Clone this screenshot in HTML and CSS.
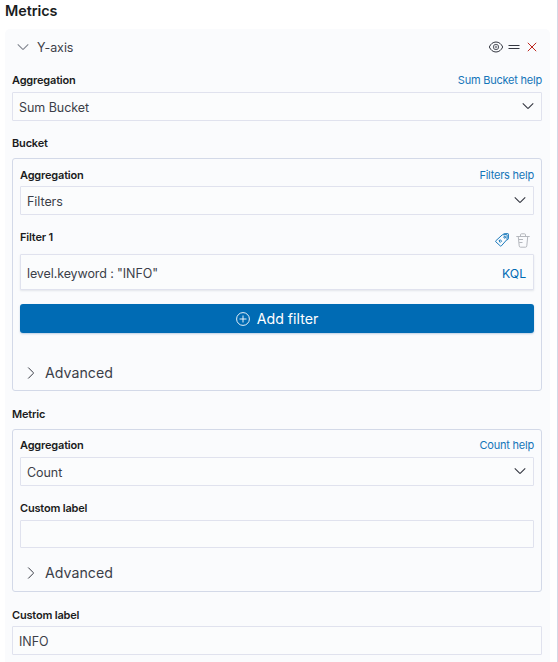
FILE: index.html
```html
<!DOCTYPE html>
<html lang="en">
<head>
<meta charset="utf-8">
<title>Metrics</title>
<link rel="stylesheet" href="styles.css">
</head>
<body>
<main class="sidebar">
  <h1 class="title">Metrics</h1>
  <section class="panel">
    <header class="panel-header">
      <svg class="chevron muted" width="14" height="14" viewBox="0 0 16 16"><path d="M2 5l5.500 5.500a.7.7 0 0 0 1 0L14 5"/></svg>
      <span class="panel-name">Y-axis</span>
      <span class="actions">
        <svg width="16" height="16" viewBox="0 0 16 16"><path d="M1.300 8C2.700 4.900 5 3 8 3s5.300 1.900 6.700 5c-1.400 3.100-3.700 5-6.700 5S2.700 11.100 1.300 8z"/><circle cx="8" cy="8" r="2.700" stroke-width=".8"/><circle cx="8" cy="8" r="1" stroke-width=".6"/></svg>
        <svg class="grab" width="12" height="16" viewBox="0 0 12 16"><path d="M.5 6.500h11M.5 9.500h11"/></svg>
        <svg class="danger" width="10" height="16" viewBox="0 0 10 16"><path d="M.8 3.800l8.400 8.400M9.200 3.800L.8 12.200"/></svg>
      </span>
    </header>
    <div class="label-row first"><span class="label">Aggregation</span><a class="help">Sum Bucket help</a></div>
    <div class="field select"><span>Sum Bucket</span><svg class="chevron" width="14" height="14" viewBox="0 0 16 16"><path d="M2 5l5.500 5.500a.7.7 0 0 0 1 0L14 5"/></svg></div>

    <div class="label-row group-label bucket-label"><span class="label">Bucket</span></div>
    <div class="group bucket">
      <div class="label-row"><span class="label">Aggregation</span><a class="help">Filters help</a></div>
      <div class="field select"><span>Filters</span><svg class="chevron" width="14" height="14" viewBox="0 0 16 16"><path d="M2 5l5.500 5.500a.7.7 0 0 0 1 0L14 5"/></svg></div>
      <div class="label-row filter-row"><span class="label">Filter 1</span>
        <span class="filter-icons">
          <svg class="tag" width="14" height="14" viewBox="0 0 14 14"><path d="M.8 7.800L7.300 1.800 11.500 1.600q.6 0 .6.600l-.1 4.300L6.300 12.900q-.5.500-1 0L.8 8.800q-.4-.5 0-1z"/><path d="M8.500 .8l4.300-.2q.6 0 .6.600v4.500l-1.400 1.600"/><circle cx="9.700" cy="4.200" r=".9"/><path d="M5.200 6.700l1.400 1.400-1.300 1.300-1.400-1.400z"/></svg>
          <svg class="trash" width="14" height="15" viewBox="0 0 14 15"><path d="M.3 3.500h13.400M4.500 3.300V1.800q0-1 1-1h3q1 0 1 1v1.500M2.300 3.800l.9 9q.1 1.400 1.300 1.400h5q1.200 0 1.300-1.400l.9-9M3 6.500h4M3.200 9.500h3.300"/></svg>
        </span>
      </div>
      <div class="field query"><span>level.keyword : "INFO"</span><a class="kql">KQL</a></div>
      <button class="add"><svg width="14" height="14" viewBox="0 0 14 14"><circle cx="7" cy="7" r="6.400"/><path d="M7 3.500v7M3.500 7h7"/></svg><span>Add filter</span></button>
      <div class="advanced"><svg width="8" height="14" viewBox="0 0 8 14"><path d="M1.200 1.500l5 5q.5.500 0 1l-5 5"/></svg><span>Advanced</span></div>
    </div>

    <div class="label-row group-label"><span class="label">Metric</span></div>
    <div class="group metric">
      <div class="label-row"><span class="label">Aggregation</span><a class="help">Count help</a></div>
      <div class="field select"><span>Count</span><svg class="chevron" width="14" height="14" viewBox="0 0 16 16"><path d="M2 5l5.500 5.500a.7.7 0 0 0 1 0L14 5"/></svg></div>
      <div class="label-row spaced"><span class="label">Custom label</span></div>
      <div class="field empty"></div>
      <div class="advanced"><svg width="8" height="14" viewBox="0 0 8 14"><path d="M1.200 1.500l5 5q.5.500 0 1l-5 5"/></svg><span>Advanced</span></div>
    </div>

    <div class="label-row last"><span class="label">Custom label</span></div>
    <div class="field"><span>INFO</span></div>
  </section>
</main>
</body>
</html>
```
FILE: styles.css
```css
* { box-sizing: border-box; }
body {
  margin: 0;
  background: #fff;
  color: #3c3f49;
  font-family: Inter, "Liberation Sans", sans-serif;
  font-size: 12.5px;
  letter-spacing: -.05px;
}
svg { display: block; flex: none; fill: none; stroke: #343741; stroke-width: 1; }
.sidebar {
  height: 662px;
  padding: 0 7px 0 5px;
  border-right: 1px solid #d5d8e6;
  overflow: hidden;
}
.title {
  margin: 0;
  height: 29px;
  line-height: 22px;
  color: #1a1c21;
  font-size: 14.4px;
  font-weight: 600;
}
.panel {
  height: 650px;
  padding: 0 8px 0 7px;
  background: #fafbfd;
  border-radius: 5px;
}
.panel-header { display: flex; align-items: center; height: 36px; padding: 0 5px 0 4px; }
.panel-name { margin-left: 7px; }
.muted { stroke: #81858f; }
.chevron { stroke-width: 1.250; }
.actions { display: flex; align-items: center; gap: 5px; margin-left: auto; }
.grab { margin-right: 2px; margin-left: -1px; }
.danger { stroke: #bd271e; }
.label-row { display: flex; align-items: center; justify-content: space-between; height: 16px; margin-bottom: 3px; }
.label { color: #1a1c21; font-size: 11px; font-weight: 600; letter-spacing: -.18px; }
.help { color: #1475b9; font-size: 11px; letter-spacing: -.22px; }
.first { margin: 7px 0 4px; }
.field {
  display: flex;
  align-items: center;
  justify-content: space-between;
  height: 29px;
  padding: 1px 6px 0;
  border: 1px solid #e0e2ee;
  border-radius: 1px;
  background: #fbfcfd;
}
.field .chevron { margin-top: -2px; }
.group-label { margin: 15px 0 7px; }
.bucket-label { margin-top: 14px; }
.group { padding: 8px 7px 0; border: 1px solid #d3d9e8; border-radius: 3px; }
.bucket { height: 233px; }
.metric { height: 163px; padding-top: 7px; }
.metric .label-row { margin-bottom: 4px; }
.filter-row { margin: 14px 0 9px; }
.filter-icons { display: flex; align-items: center; gap: 7px; margin: 6px 4px 0 0; }
.tag { stroke: #006bb4; stroke-width: .9; }
.trash { stroke: #b4b7bd; }
.query { height: 36px; padding: 2px 7px 0 6px; box-shadow: 0 1px 2px rgba(60, 70, 100, .12); letter-spacing: -.1px; }
.kql { color: #006bb4; font-size: 12.3px; }
.add {
  display: flex;
  align-items: center;
  justify-content: center;
  gap: 7px;
  width: 100%;
  height: 29px;
  margin: 14px 0 29px;
  padding: 0;
  border: 0;
  border-radius: 3px;
  background: #006bb4;
  box-shadow: 0 1px 2px rgba(0, 80, 150, .25);
  color: #fff;
  font: 14.2px Inter, "Liberation Sans", sans-serif;
}
.add svg { stroke: #fff; stroke-width: .9; }
.advanced { display: flex; align-items: center; gap: 10px; height: 21px; padding-left: 7px; font-size: 14.2px; letter-spacing: 0; }
.spaced { margin-top: 14px; }
.empty { height: 28px; margin-bottom: 14px; }
.last { margin-top: 15px; }
```
